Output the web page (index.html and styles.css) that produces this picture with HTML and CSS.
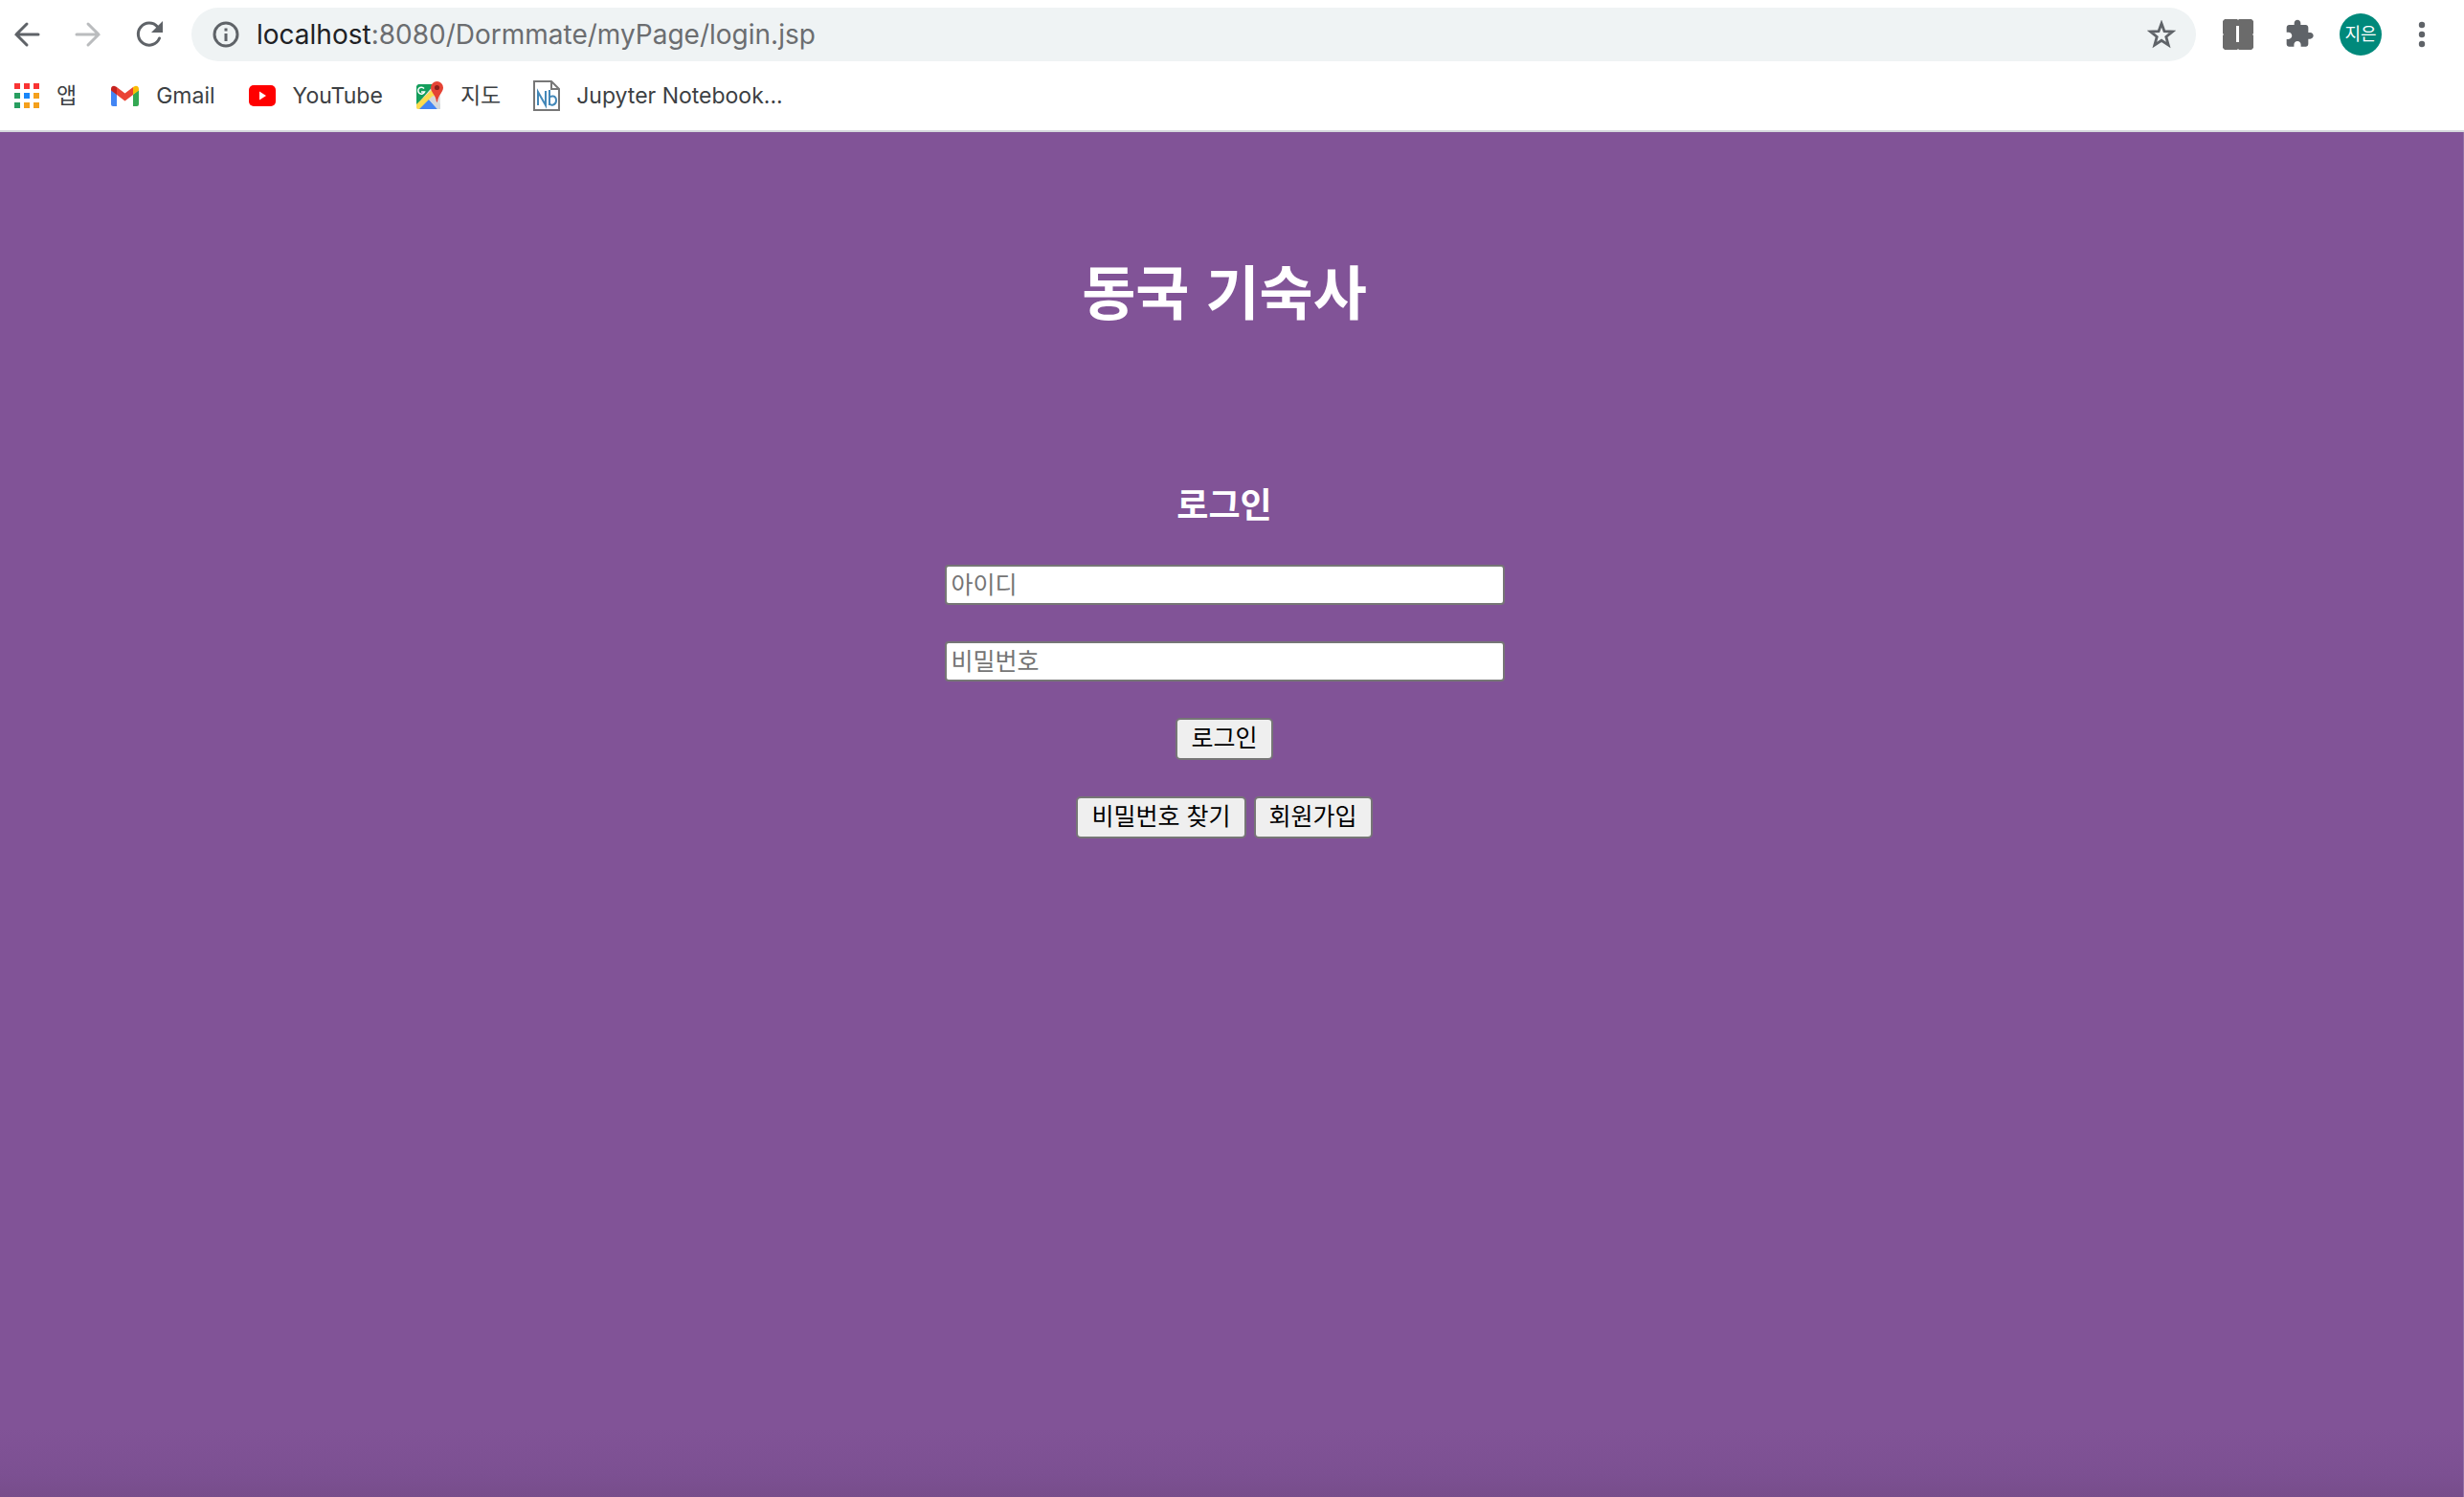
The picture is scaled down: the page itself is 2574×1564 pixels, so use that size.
FILE: index.html
```html
<!DOCTYPE html>
<html lang="ko">
<head>
<meta charset="utf-8">
<title>동국 기숙사</title>
<link rel="stylesheet" href="styles.css">
</head>
<body>
<header class="browser">
  <div class="toolbar">
    <button class="tool back" type="button" aria-label="뒤로"><svg width="28" height="28" viewBox="0 0 28 28" fill="none" stroke="#5f6368" stroke-width="3" stroke-linecap="round"><path d="M26 14H3M14 3L3 14l11 11"/></svg></button>
    <button class="tool forward" type="button" aria-label="앞으로"><svg width="28" height="28" viewBox="0 0 28 28" fill="none" stroke="#babcbe" stroke-width="3" stroke-linecap="round"><path d="M2 14h23M14 3l11 11-11 11"/></svg></button>
    <button class="tool reload" type="button" aria-label="새로고침"><svg width="28" height="28" viewBox="0 0 28 28"><path d="M24.500 18A11.500 11.500 0 1 1 22.500 6" fill="none" stroke="#5f6368" stroke-width="3" stroke-linecap="round"/><path d="M28 0v12H16z" fill="#5f6368"/></svg></button>
    <div class="address">
      <svg width="28" height="28" viewBox="0 0 28 28"><circle cx="14" cy="14" r="12" fill="none" stroke="#5f6368" stroke-width="3"/><path d="M12.500 7.500h3v3h-3zM12.500 13h3v8h-3z" fill="#5f6368"/></svg>
      <p class="url"><span class="host">localhost</span>:8080/Dormmate/myPage/login.jsp</p>
      <button class="tool" type="button" aria-label="북마크에 추가"><svg width="30" height="30" viewBox="0 0 30 30"><path d="M15 3.500l3 8.200 8.500.4-6.700 5.300 2.400 8.700-7.200-4.800-7.200 4.800 2.400-8.700-6.700-5.300 8.500-.4z" fill="none" stroke="#5f6368" stroke-width="2.800"/></svg></button>
    </div>
    <div class="extensions">
      <button class="tool" type="button" aria-label="확장 프로그램"><svg width="32" height="32" viewBox="0 0 32 32"><path d="M2 0h13l1 1 1-1h13l2 2v13l-1 1 1 1v13l-2 2H17l-1-1-1 1H2l-2-2V17l1-1-1-1V2z" fill="#6b6b6b"/><path d="M14 7h3v17h-3z" fill="#fff"/></svg></button>
      <button class="tool" type="button" aria-label="확장 프로그램 관리"><svg width="32" height="32" viewBox="0 0.500 24 24"><path d="M20.500 11H19V7c0-1.100-.9-2-2-2h-4V3.500C13 2.120 11.880 1 10.500 1S8 2.120 8 3.500V5H4c-1.100 0-1.990.9-1.990 2v3.800H3.500c1.490 0 2.700 1.210 2.700 2.700s-1.210 2.700-2.700 2.700H2V20c0 1.100.9 2 2 2h3.800v-1.500c0-1.490 1.210-2.700 2.700-2.700s2.700 1.210 2.700 2.700V22H17c1.100 0 2-.9 2-2v-4h1.500c1.380 0 2.500-1.120 2.500-2.500S21.880 11 20.500 11z" fill="#5f6368"/></svg></button>
      <button class="tool avatar" type="button">지은</button>
      <button class="tool" type="button" aria-label="메뉴"><svg width="8" height="28" viewBox="0 0 8 28" fill="#5f6368"><circle cx="4" cy="4" r="3.200"/><circle cx="4" cy="14" r="3.200"/><circle cx="4" cy="24" r="3.200"/></svg></button>
    </div>
  </div>
  <nav class="bookmarks">
    <a class="bookmark" href="#"><svg width="28" height="28" viewBox="0 0 28 28"><path d="M1 1h6v6H1zM11 1h6v6h-6zM21 1h6v6h-6z" fill="#f93434"/><path d="M1 11h6v6H1zM1 21h6v6H1z" fill="#289e60"/><path d="M11 11h6v6h-6z" fill="#1a86f8"/><path d="M21 11h6v6h-6zM11 21h6v6h-6zM21 21h6v6h-6z" fill="#f4a01c"/></svg>앱</a>
    <a class="bookmark" href="#"><svg width="32" height="28" viewBox="0 0 32 28"><path d="M2 8l6 4.500V25H4a2 2 0 0 1-2-2z" fill="#4285f4"/><path d="M31 8l-6 4.500V25h4a2 2 0 0 0 2-2z" fill="#34a853"/><path d="M8 5l8.500 6.500L25 5v8l-8.500 6.500L8 13z" fill="#ea4335"/><path d="M2 7c0-3 3-4 5-2.500L8 5v8L2 8.500z" fill="#c5221f"/><path d="M31 7c0-3-3-4-5-2.500L25 5v8l6-4.500z" fill="#fbbc04"/></svg>Gmail</a>
    <a class="bookmark" href="#"><svg width="30" height="28" viewBox="0 0 30 28"><rect x="1" y="3" width="28" height="22" rx="5" fill="#f00"/><path d="M12 9.500v9l7-4.500z" fill="#fff"/></svg>YouTube</a>
    <a class="bookmark" href="#"><svg width="30" height="30" viewBox="0 0 30 30"><rect x="1" y="3" width="25" height="26" rx="2" fill="#dfe1e3"/><path d="M3 3h17L1 25V5z" fill="#149e5c"/><path d="M1 24L19 7l5 4L5 29H3a2 2 0 0 1-2-2z" fill="#fddc4f"/><path d="M4 29l10-10 9 10z" fill="#4285f4"/><path d="M14 19l4-4 8 9v5h-3z" fill="#d5d8db"/><path d="M9 7.500A3.500 3.500 0 1 0 9.500 11H6" fill="none" stroke="#fff" stroke-width="1.500"/><path d="M22.500 0a6.500 6.500 0 0 1 6.500 6.500c0 5-5 7-6 15h-1c-1-8-6-10-6-15A6.500 6.500 0 0 1 22.500 0z" fill="#e54335"/><circle cx="22.500" cy="6.500" r="2.600" fill="#8c1f1b"/></svg>지도</a>
    <a class="bookmark" href="#"><svg width="28" height="32" viewBox="0 0 28 32"><path d="M1 1h18l8 8v22H1z" fill="#fff" stroke="#777" stroke-width="2"/><path d="M19 1v8h8" fill="none" stroke="#777" stroke-width="2"/><path d="M5 26V12l8 14V11M17 10v16M17 18c1-2 7-3 7 3 0 5-6 6-7 3" fill="none" stroke="#4388b8" stroke-width="2"/></svg>Jupyter Notebook...</a>
  </nav>
</header>
<main class="page">
  <h1 class="title">동국 기숙사</h1>
  <form class="login">
    <h2 class="subtitle">로그인</h2>
    <input class="field" type="text" placeholder="아이디" aria-label="아이디">
    <input class="field" type="password" placeholder="비밀번호" aria-label="비밀번호">
    <button class="action" type="submit">로그인</button>
    <div class="links">
      <button class="action" type="button">비밀번호 찾기</button>
      <button class="action" type="button">회원가입</button>
    </div>
  </form>
</main>
</body>
</html>
```
FILE: styles.css
```css
* { box-sizing: border-box; }

body {
  margin: 0;
  min-height: 100vh;
  display: flex;
  flex-direction: column;
  font-family: Inter, "Noto Sans CJK KR", sans-serif;
}

svg { display: block; flex: none; }

.browser {
  height: 138px;
  padding-top: 8px;
  background: #fff;
  border-bottom: 2px solid #d5d8dd;
}

.toolbar {
  display: flex;
  align-items: center;
  height: 56px;
  padding: 0 40px 0 14px;
}

.tool {
  padding: 0;
  border: 0;
  background: none;
  font-family: inherit;
}

.forward { margin-left: 36px; }
.reload { margin: 0 30px 0 36px; }

.address {
  flex: 1;
  display: flex;
  align-items: center;
  height: 56px;
  padding: 0 21px 0 22px;
  border-radius: 28px;
  background: #eff3f4;
}

.url {
  flex: 1;
  margin: 0 0 0 18px;
  font-size: 28px;
  line-height: 56px;
  color: #6b6d70;
}

.host { color: #202124; }

.extensions {
  display: flex;
  align-items: center;
  gap: 32px;
  margin-left: 28px;
}

.avatar {
  width: 44px;
  height: 44px;
  margin-left: -6px;
  border-radius: 50%;
  background: #00897b;
  color: #fff;
  font-size: 18px;
  line-height: 44px;
}

.extensions .tool:last-child { margin-left: 6px; }

.bookmarks {
  display: flex;
  align-items: center;
  gap: 34px;
  height: 72px;
  padding-left: 14px;
}

.bookmark {
  display: flex;
  align-items: center;
  gap: 17px;
  font-size: 23px;
  line-height: 32px;
  color: #3c4043;
  text-decoration: none;
}

.page {
  flex: 1;
  display: flex;
  flex-direction: column;
  align-items: center;
  padding: 121px 15px 0 0;
  border-right: 1px solid #9370a6;
  background: linear-gradient(to top, #774d8b, #7c5092 24px, #815397 72px) #815397;
}

.title {
  margin: 0;
  color: #fff;
  font-family: "Noto Sans CJK KR", sans-serif;
  font-size: 61px;
  line-height: 88px;
}

.login {
  display: flex;
  flex-direction: column;
  align-items: center;
  margin-top: 152px;
  font-family: "Noto Sans CJK KR", sans-serif;
}

.subtitle {
  margin: 0 0 39px;
  color: #fff;
  font-size: 36px;
  line-height: 52px;
}

.field {
  width: 585px;
  height: 42px;
  margin-bottom: 38px;
  padding: 0 5px 4px;
  border: 2px solid #767676;
  border-radius: 4px;
  background: #fff;
  font-family: inherit;
  font-size: 25px;
}

.field::placeholder { color: #757575; }

.action {
  height: 44px;
  padding: 0 14px 6px;
  border: 2px solid #767676;
  border-radius: 5px;
  background: #efefef;
  color: #000;
  font-family: inherit;
  font-size: 25px;
  line-height: 34px;
}

.links {
  display: flex;
  gap: 8px;
  margin-top: 38px;
}
```
